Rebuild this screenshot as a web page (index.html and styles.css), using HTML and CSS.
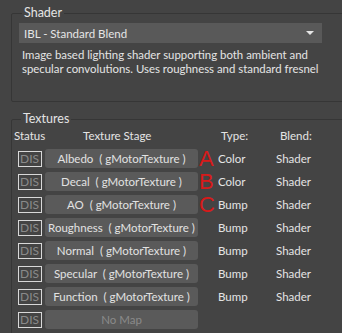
FILE: index.html
```html
<!DOCTYPE html>
<html lang="en">
<head>
  <meta charset="UTF-8">
  <title>Shader Settings</title>
  <link rel="stylesheet" href="styles.css">
</head>
<body>
  <div class="panel">
    <fieldset class="group shader-group">
      <legend>Shader</legend>
      <div class="dropdown">
        <span>IBL - Standard Blend</span>
        <span class="arrow"></span>
      </div>
      <p class="description">Image based lighting shader supporting both ambient and<br>specular convolutions. Uses roughness and standard fresnel</p>
    </fieldset>

    <fieldset class="group textures-group">
      <legend>Textures</legend>
      <div class="header">
        <span class="h-status">Status</span>
        <span class="h-stage">Texture Stage</span>
        <span class="h-type">Type:</span>
        <span class="h-blend">Blend:</span>
      </div>

      <div class="row">
        <span class="dis">DIS</span>
        <button class="stage">Albedo&nbsp; ( gMotorTexture )</button>
        <span class="mark">A</span>
        <span class="type">Color</span>
        <span class="blend">Shader</span>
      </div>
      <div class="row">
        <span class="dis">DIS</span>
        <button class="stage">Decal&nbsp; ( gMotorTexture )</button>
        <span class="mark">B</span>
        <span class="type">Color</span>
        <span class="blend">Shader</span>
      </div>
      <div class="row">
        <span class="dis">DIS</span>
        <button class="stage">AO&nbsp; ( gMotorTexture )</button>
        <span class="mark">C</span>
        <span class="type">Bump</span>
        <span class="blend">Shader</span>
      </div>
      <div class="row">
        <span class="dis">DIS</span>
        <button class="stage">Roughness&nbsp; ( gMotorTexture )</button>
        <span class="mark"></span>
        <span class="type">Bump</span>
        <span class="blend">Shader</span>
      </div>
      <div class="row">
        <span class="dis">DIS</span>
        <button class="stage">Normal&nbsp; ( gMotorTexture )</button>
        <span class="mark"></span>
        <span class="type">Bump</span>
        <span class="blend">Shader</span>
      </div>
      <div class="row">
        <span class="dis">DIS</span>
        <button class="stage">Specular&nbsp; ( gMotorTexture )</button>
        <span class="mark"></span>
        <span class="type">Bump</span>
        <span class="blend">Shader</span>
      </div>
      <div class="row">
        <span class="dis">DIS</span>
        <button class="stage">Function&nbsp; ( gMotorTexture )</button>
        <span class="mark"></span>
        <span class="type">Bump</span>
        <span class="blend">Shader</span>
      </div>
      <div class="row">
        <span class="dis">DIS</span>
        <button class="stage empty">No Map</button>
        <span class="mark"></span>
        <span class="type"></span>
        <span class="blend"></span>
      </div>
    </fieldset>
  </div>
</body>
</html>
```

FILE: styles.css
```css
html, body {
  margin: 0;
  padding: 0;
  background-color: #444444;
  overflow: hidden;
}

body {
  font-family: Lato, "Noto Sans", Arial, sans-serif;
  font-size: 11.5px;
  color: #e4e4e4;
  width: 342px;
  height: 333px;
}

.panel {
  padding: 6px 0 0 11px;
  width: 360px;
}

.group {
  margin: 0;
  border: 1px solid #363636;
  border-radius: 2px;
  padding: 0;
}

.group legend {
  padding: 0 2px;
  margin-left: 3px;
  font-size: 12.5px;
  line-height: 14px;
}

/* Shader box */
.shader-group {
  height: 91px;
  padding: 3px 0 0 7px;
}

.dropdown {
  width: 303px;
  height: 20px;
  background-color: #595959;
  display: flex;
  align-items: center;
  justify-content: space-between;
  padding: 0 8px 0 5px;
  box-sizing: border-box;
  font-size: 11.5px;
  color: #e6e6e6;
}

.arrow {
  width: 0;
  height: 0;
  border-left: 4px solid transparent;
  border-right: 4px solid transparent;
  border-top: 4px solid #e6e6e6;
}

.description {
  margin: 5px 0 0 3px;
  font-size: 11.4px;
  line-height: 14px;
  white-space: nowrap;
}

/* Textures box */
.textures-group {
  margin-top: 10px;
  height: 230px;
  padding: 0 0 0 6px;
}

.header {
  display: flex;
  height: 18px;
  align-items: center;
  margin: 0 0 3px -4px;
}

.h-status { width: 69px; }
.h-stage { width: 138px; }
.h-type { width: 59px; }

.row {
  display: flex;
  align-items: center;
  height: 23px;
}

.dis {
  width: 21px;
  height: 14px;
  border: 1px solid #d8d8d8;
  color: #8a8a8a;
  font-size: 12px;
  line-height: 14px;
  padding-left: 1px;
}

.stage {
  margin-left: 3px;
  width: 153px;
  height: 19px;
  border: none;
  border-radius: 3px;
  background-color: #5a5a5a;
  color: #e2e2e2;
  font-family: inherit;
  font-size: 11.5px;
  padding: 0;
  white-space: nowrap;
  overflow: hidden;
}

.stage.empty {
  color: #8a8a8a;
}

.mark {
  width: 20px;
  padding-left: 1px;
  box-sizing: border-box;
  color: #d81a1a;
  font-family: "Liberation Sans", Arial, sans-serif;
  font-size: 22px;
  line-height: 20px;
}

.type { width: 58px; }
.blend { width: 60px; }
```
